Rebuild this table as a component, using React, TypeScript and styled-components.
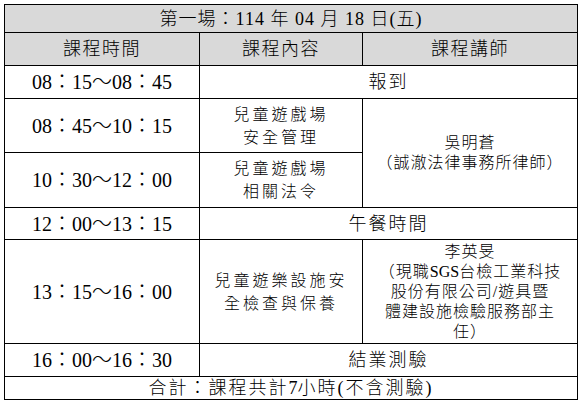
import React from 'react'
import styled, { createGlobalStyle } from 'styled-components'

const GlobalStyle = createGlobalStyle`
  body {
    margin: 0;
    background: #fff;
  }
`

const Page = styled.div`
  padding: 4px;
`

const Schedule = styled.div`
  display: grid;
  grid-template-columns: 194px 162px 214px;
  grid-template-rows: 27px 32px 32px 53px 54px 31px 103px 32px 22px;
  gap: 1px;
  padding: 1px;
  width: max-content;
  background: #000;
  color: #000;
  font-family: "Liberation Serif", "Noto Sans CJK TC", serif;
  font-weight: 300;
`

const Cell = styled.div<{ $span?: number; $rows?: number; $shade?: boolean }>`
  grid-column: span ${p => p.$span ?? 1};
  grid-row: span ${p => p.$rows ?? 1};
  display: flex;
  flex-direction: column;
  align-items: center;
  justify-content: center;
  text-align: center;
  background: ${p => (p.$shade ? '#d9d9d9' : '#fff')};
  overflow: hidden;
`

const Title = styled.span`
  font-size: 18px;
  letter-spacing: 1px;
  line-height: 22px;
`

const HeadText = styled.span`
  font-size: 18px;
  letter-spacing: 1.5px;
  line-height: 22px;
`

const Time = styled.span`
  font-size: 20px;
  line-height: 24px;
`

const Topic = styled.span`
  font-size: 16px;
  letter-spacing: 3px;
  line-height: 23px;
  white-space: nowrap;
`

const Lecturer = styled.span`
  font-size: 16px;
  letter-spacing: 1px;
  line-height: 20px;
  white-space: nowrap;
`

const Latin = styled.span`
  font-family: "Liberation Serif", serif;
  letter-spacing: 0;
`

const Notice = styled.span`
  font-size: 18px;
  letter-spacing: 2px;
  line-height: 22px;
`

const sessions = [
  { time: '08：45～10：15', topic: ['兒童遊戲場', '安全管理'] },
  { time: '10：30～12：00', topic: ['兒童遊戲場', '相關法令'] },
]

function App(): JSX.Element {
  return (
    <Page>
      <GlobalStyle />
      <Schedule>
        <Cell $span={3} $shade>
          <Title>第一場：114 年 04 月 18 日(五)</Title>
        </Cell>
        <Cell $shade><HeadText>課程時間</HeadText></Cell>
        <Cell $shade><HeadText>課程內容</HeadText></Cell>
        <Cell $shade><HeadText>課程講師</HeadText></Cell>

        <Cell><Time>08：15～08：45</Time></Cell>
        <Cell $span={2}><Notice>報到</Notice></Cell>

        <Cell><Time>{sessions[0].time}</Time></Cell>
        <Cell>
          <Topic>{sessions[0].topic[0]}<br />{sessions[0].topic[1]}</Topic>
        </Cell>
        <Cell $rows={2}>
          <Lecturer>吳明蒼<br />（誠澈法律事務所律師）</Lecturer>
        </Cell>
        <Cell><Time>{sessions[1].time}</Time></Cell>
        <Cell>
          <Topic>{sessions[1].topic[0]}<br />{sessions[1].topic[1]}</Topic>
        </Cell>

        <Cell><Time>12：00～13：15</Time></Cell>
        <Cell $span={2}><Notice>午餐時間</Notice></Cell>

        <Cell><Time>13：15～16：00</Time></Cell>
        <Cell>
          <Topic>兒童遊樂設施安<br />全檢查與保養</Topic>
        </Cell>
        <Cell>
          <Lecturer>
            李英旻<br />
            （現職<Latin>SGS</Latin>台檢工業科技<br />
            股份有限公司/遊具暨<br />
            體建設施檢驗服務部主<br />
            任）
          </Lecturer>
        </Cell>

        <Cell><Time>16：00～16：30</Time></Cell>
        <Cell $span={2}><Notice>結業測驗</Notice></Cell>

        <Cell $span={3}>
          <Notice>合計：課程共計<Latin>7</Latin>小時(不含測驗)</Notice>
        </Cell>
      </Schedule>
    </Page>
  )
}

export default App
